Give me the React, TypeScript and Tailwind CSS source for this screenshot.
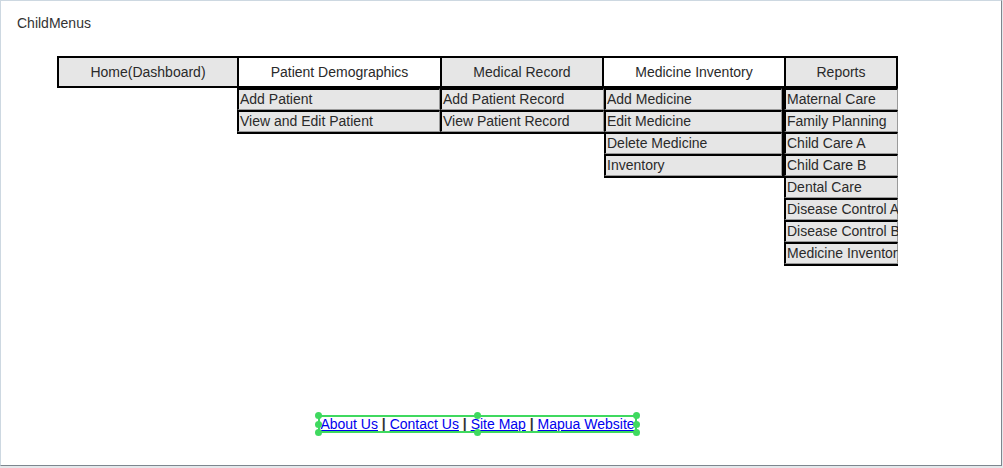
const menus = [
  { label: "Home(Dashboard)", w: "w-[178px]", active: false, items: [] as string[] },
  { label: "Patient Demographics", w: "w-[203px]", active: true, items: ["Add Patient", "View and Edit Patient"] },
  { label: "Medical Record", w: "w-[162px]", active: false, items: ["Add Patient Record", "View Patient Record"] },
  { label: "Medicine Inventory", w: "w-[182px]", active: true, items: ["Add Medicine", "Edit Medicine", "Delete Medicine", "Inventory"] },
  {
    label: "Reports",
    w: "w-[112px]",
    active: false,
    items: [
      "Maternal Care",
      "Family Planning",
      "Child Care A",
      "Child Care B",
      "Dental Care",
      "Disease Control A",
      "Disease Control B",
      "Medicine Inventory",
    ],
  },
];

const dropWidths = ["w-[180px]", "w-[203px]", "w-[164px]", "w-[180px]", "w-[114px]"];

const links = ["About Us", "Contact Us", "Site Map", "Mapua Website"];

function Handle() {
  return <span className="block h-[7px] w-[7px] rounded-full bg-[#3fd95f]" />;
}

export default function App() {
  return (
    <div className="h-[468px] w-[1003px] bg-[#e4e8eb] font-['Liberation_Sans',Arial,sans-serif] text-[14px] text-[#2a2a2a]">
      <div className="h-[466px] w-[1002px] border-t border-l border-r border-b border-t-[#cdd8e1] border-l-[#cdd8e1] border-r-[#7d868e] border-b-[#7d868e] bg-white">
        <div className="pl-[16px] pt-[14px] leading-[16px] text-[#333]">ChildMenus</div>

        <div className="ml-[56px] mt-[25px] w-[841px]">
          {/* top menu bar */}
          <div className="flex h-[32px] border-2 border-black">
            {menus.map((m, i) => (
              <div
                key={m.label}
                className={`${m.w} flex items-center justify-center ${i > 0 ? "border-l-2 border-black" : ""} ${
                  m.active ? "bg-white" : "bg-[#e6e6e6]"
                }`}
              >
                {m.label}
              </div>
            ))}
          </div>

          {/* dropdowns */}
          <div className="flex items-start">
            {menus.map((m, i) =>
              m.items.length === 0 ? (
                <div key={m.label} className={dropWidths[i]} />
              ) : (
                <div
                  key={m.label}
                  className={`${dropWidths[i]} flex flex-col overflow-hidden border-b-2 border-black ${
                    i === 3 ? "border-r-2" : ""
                  }`}
                >
                  {m.items.map((it) => (
                    <div
                      key={it}
                      className="h-[22px] whitespace-nowrap border-t-2 border-l-2 border-r border-b border-t-black border-l-black border-r-[#9a9a9a] border-b-[#9a9a9a] bg-[#e6e6e6] pl-[1px] leading-[18px]"
                    >
                      {it}
                    </div>
                  ))}
                </div>
              )
            )}
          </div>

          {/* footer links */}
          <div className="mt-[150px] text-center leading-[16px]">
            <span className="relative inline-block">
              {links.map((l, i) => (
                <span key={l}>
                  {i > 0 && <span className="font-bold text-[#333]"> | </span>}
                  <a href="#" className="text-[#0000ee] underline">
                    {l}
                  </a>
                </span>
              ))}
              {/* selection frame over the link line */}
              <span className="pointer-events-none absolute -left-[2px] -right-[2px] -top-[1px] -bottom-[1px] flex flex-col justify-between border-2 border-[#3fd95f]">
                <span className="-mx-[5px] -mt-[5px] flex justify-between">
                  <Handle />
                  <Handle />
                  <Handle />
                </span>
                <span className="-mx-[5px] flex justify-between">
                  <Handle />
                  <Handle />
                </span>
                <span className="-mx-[5px] -mb-[5px] flex justify-between">
                  <Handle />
                  <Handle />
                  <Handle />
                </span>
              </span>
            </span>
          </div>
        </div>
      </div>
    </div>
  );
}
